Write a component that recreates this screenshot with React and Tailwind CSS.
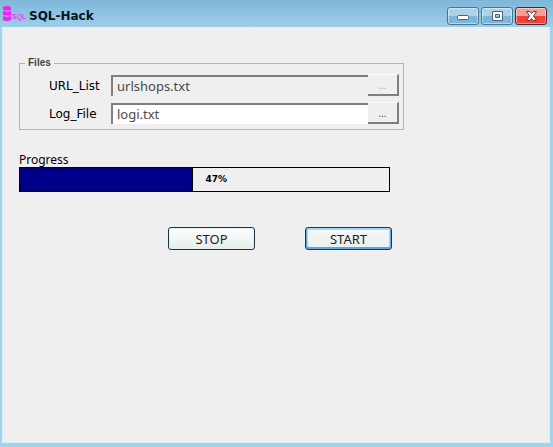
const files = [
  { id: "url-list", label: "URL_List", value: "urlshops.txt", locked: true },
  { id: "log-file", label: "Log_File", value: "logi.txt", locked: false },
];

const progress = 47;

function AppIcon() {
  return (
    <svg className="w-5 h-5 shrink-0 overflow-visible" viewBox="0 0 20 20" aria-hidden="true">
      <g fill="#f81df4">
        <path d="M0 3q4-2 8 0v3q-4 1-8 0z" />
        <path d="M0 7q4 1.500 8 0v4q-4 1-8 0z" />
        <path d="M0 12q4 1.500 8 0v4q-4 2-8 0z" />
      </g>
      <text x="9" y="15" fill="#f23cf2" className="font-['Liberation_Sans_Narrow','Liberation_Sans',sans-serif] text-[7px] font-bold">
        SQL
      </text>
    </svg>
  );
}

function CaptionButton({ label, close, children }) {
  return (
    <button
      type="button"
      aria-label={label}
      className={`flex h-[18px] w-8 items-center justify-center rounded-[3px] border shadow-[inset_0_0_0_1px_rgba(255,255,255,0.45)] ${
        close
          ? "border-[#5c2030] bg-linear-to-b from-[#f3a093] from-50% to-[#ee4431] to-50%"
          : "border-[#4b7591] bg-linear-to-b from-[#aad3ea] from-50% to-[#7db6da] to-50%"
      }`}
    >
      <svg className="w-4 h-3" viewBox="0 0 16 12" aria-hidden="true">
        {children}
      </svg>
    </button>
  );
}

function TitleBar() {
  return (
    <header className="flex h-[27px] items-center justify-between bg-linear-to-b from-[#7fb7d9] to-[#9dcfea] px-[3px]">
      <div className="flex items-center gap-[6px]">
        <AppIcon />
        <h1 className="pt-1 font-['DejaVu_Sans',sans-serif] text-xs font-bold text-[#061420]">SQL-Hack</h1>
      </div>
      <div className="flex gap-[2px] pt-[5px] pr-[3px]">
        <CaptionButton label="Minimize">
          <rect x="2.500" y="5.500" width="11" height="4" rx="1" fill="#fff" stroke="#4b6273" />
        </CaptionButton>
        <CaptionButton label="Maximize">
          <path fillRule="evenodd" d="M3.500 1.500h10v9h-10zM6.500 4.500v3h4v-3z" fill="#fff" stroke="#4b6273" />
        </CaptionButton>
        <CaptionButton label="Close" close>
          <path d="M3.500 1.500h3.500l1.500 2 1.500-2h3.500l-3 4.500 3 4.500h-3.500l-1.500-2-1.500 2H3.500l3-4.500z" fill="#fff" stroke="#703a40" />
        </CaptionButton>
      </div>
    </header>
  );
}

function FileRow({ id, label, value, locked }) {
  return (
    <div className="flex items-center">
      <label htmlFor={id} className="w-[62px] pt-[2px] font-['DejaVu_Sans',sans-serif] text-xs text-black">
        {label}
      </label>
      <input
        id={id}
        type="text"
        defaultValue={value}
        readOnly={locked}
        className={`h-[21px] min-w-0 flex-1 border-t-2 border-l-2 border-[#7f7f7f] pl-1 text-[13px] text-[#4a4a4a] outline-none ${
          locked ? "bg-[#efefef]" : "bg-white"
        }`}
      />
      <button
        type="button"
        disabled={locked}
        aria-label={`Browse ${label}`}
        className={`h-[22px] w-[31px] border-t border-r-2 border-b-2 border-t-white border-r-[#7f7f7f] border-b-[#7f7f7f] bg-[#efefef] text-[10px] leading-none ${
          locked ? "text-[#b0b0b0]" : "text-[#555555]"
        }`}
      >
        ...
      </button>
    </div>
  );
}

function ActionButton({ focused, children }) {
  return (
    <button
      type="button"
      className={`h-[23px] w-[87px] rounded-[3px] border bg-linear-to-b text-[13px] leading-5 text-[#222222] ${
        focused
          ? "border-[#12395e] from-[#f6f9f9] to-[#e9eef0] shadow-[inset_0_-1px_0_1px_#5ea6de,inset_0_0_0_2px_#a4d8f5]"
          : "border-[#14374a] from-white to-[#e6ede9] shadow-[inset_0_0_0_1px_#e4f1ee]"
      }`}
    >
      {children}
    </button>
  );
}

export default function App() {
  return (
    <div className="flex min-h-screen flex-col bg-[#a4d3ea] font-['Noto_Sans',sans-serif]">
      <TitleBar />
      <main className="mr-[3px] mb-1 ml-[2px] flex-1 border-r border-b border-l border-[#d9ecf8] bg-[#efefef] pt-[30px] pl-4">
        <fieldset className="w-[385px] border border-[#b4b4b4] pr-1 pb-[5px] pl-[29px]">
          <legend className="-ml-6 px-[3px] font-['Liberation_Sans_Narrow','Liberation_Sans',sans-serif] text-[10px] leading-3 font-bold text-[#444444]">
            Files
          </legend>
          <div className="flex flex-col gap-[6px] pt-[5px]">
            {files.map((file) => (
              <FileRow key={file.id} {...file} />
            ))}
          </div>
        </fieldset>

        <section className="mt-[21px] w-[371px]">
          <h2 id="progress-label" className="pt-px text-xs leading-[15px] text-black">
            Progress
          </h2>
          <div
            role="progressbar"
            aria-labelledby="progress-label"
            aria-valuenow={progress}
            aria-valuemin={0}
            aria-valuemax={100}
            className="flex h-[25px] items-center border border-black"
          >
            <div
              className="h-full border-r border-black bg-[#00008b] shadow-[inset_0_0_2px_#000030]"
              style={{ width: `${progress}%` }}
            />
            <span className="pl-3 font-['DejaVu_Sans',sans-serif] text-[9px] font-bold text-black">{progress}%</span>
          </div>
        </section>

        <div className="mt-[35px] ml-[149px] flex gap-[50px]">
          <ActionButton>STOP</ActionButton>
          <ActionButton focused>START</ActionButton>
        </div>
      </main>
    </div>
  );
}
